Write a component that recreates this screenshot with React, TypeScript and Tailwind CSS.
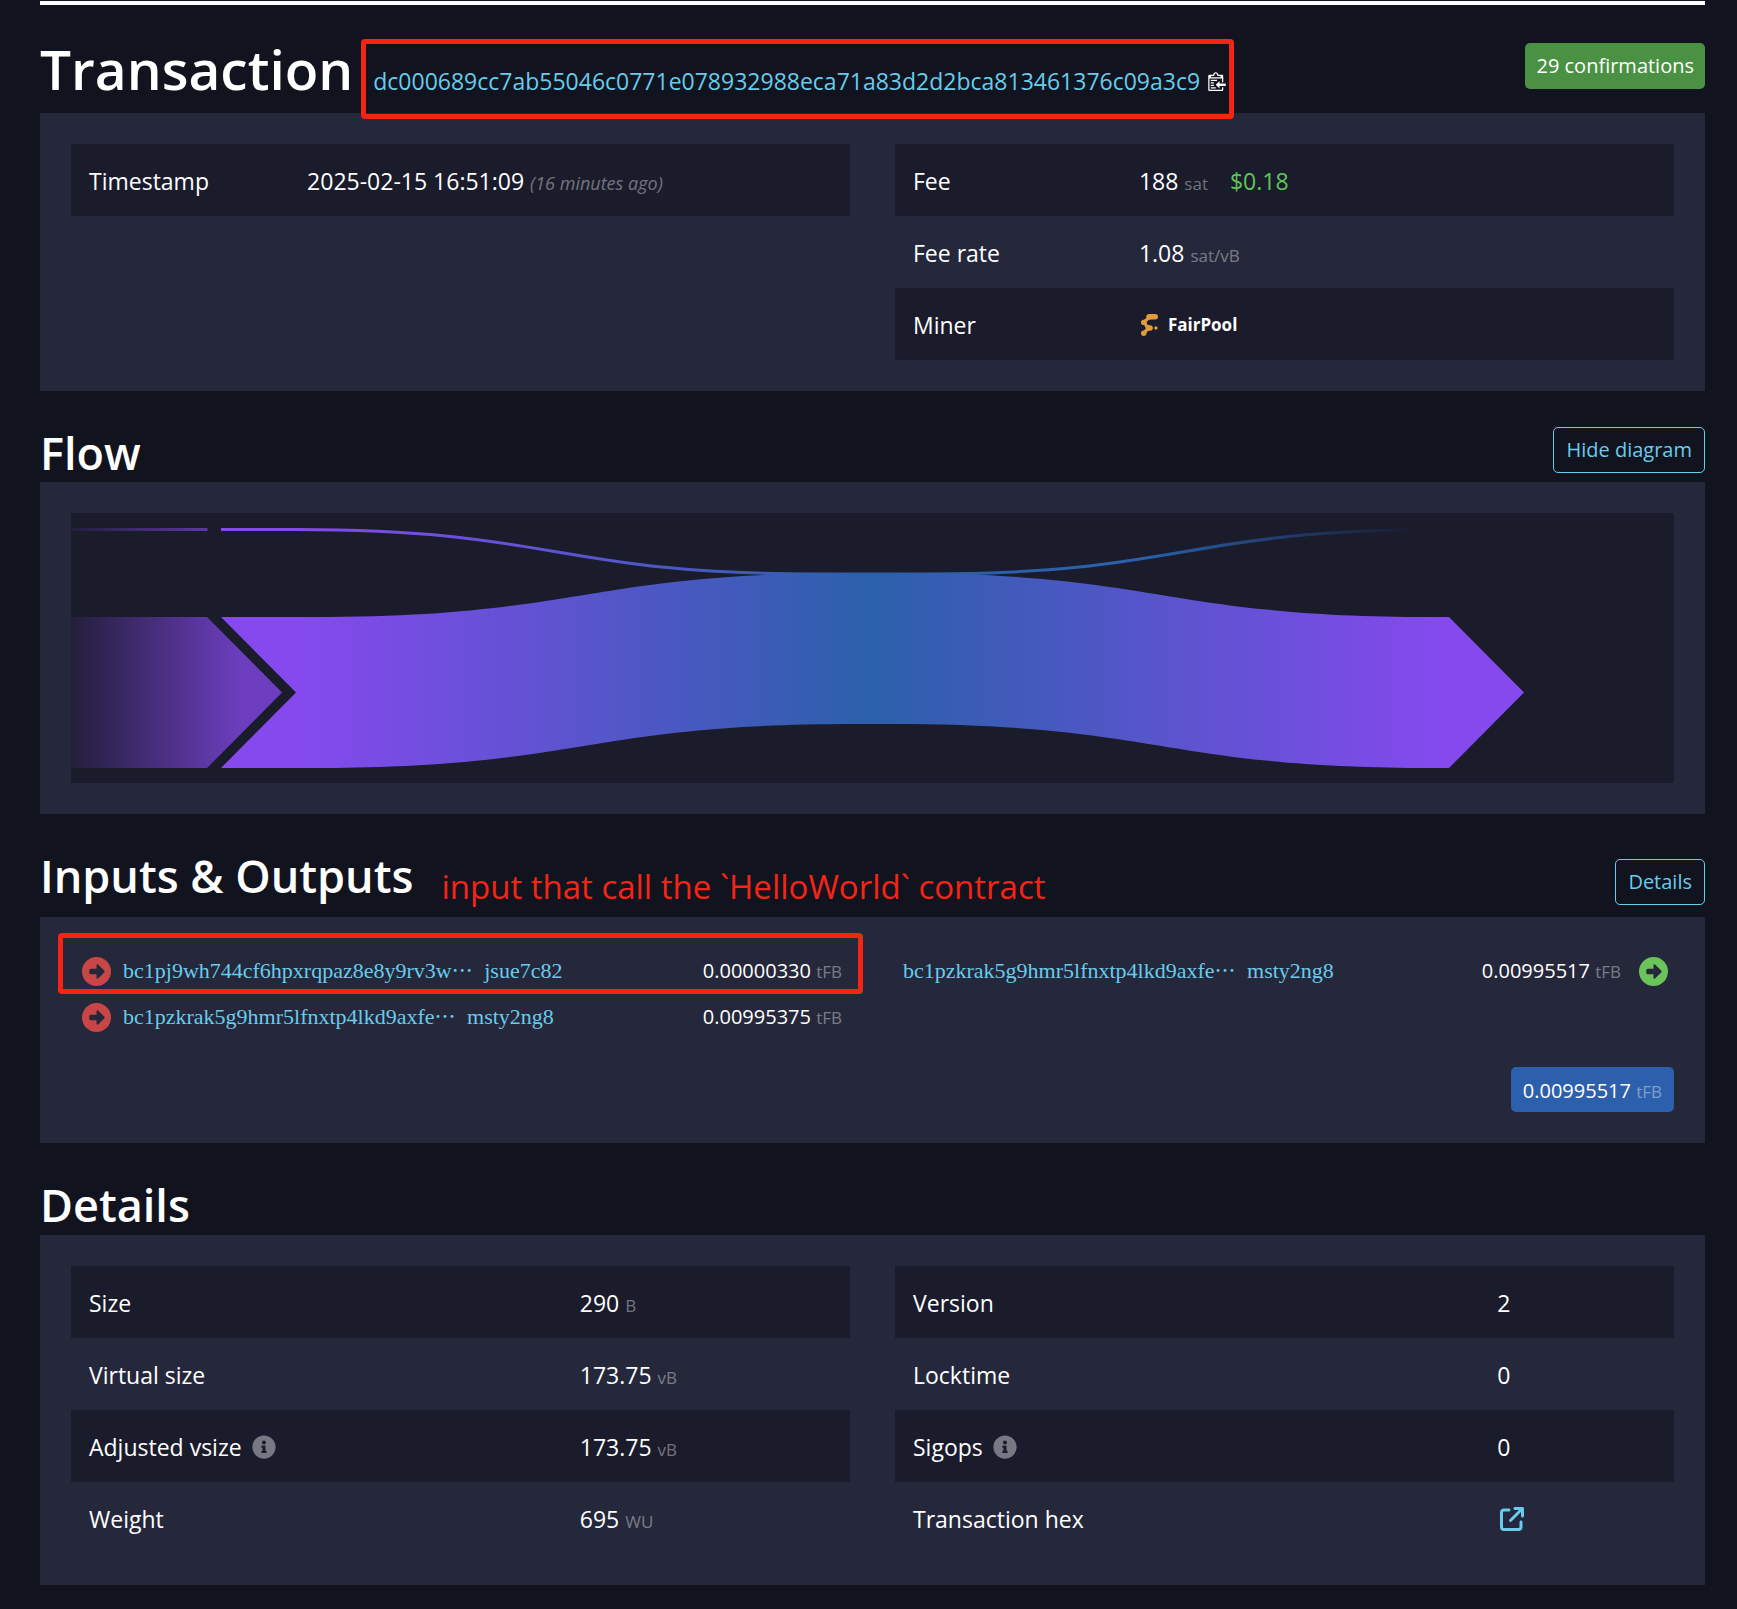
import type { ReactNode } from "react";
import { FaInfoCircle } from "react-icons/fa";
import { FaArrowUpRightFromSquare, FaCircleRight } from "react-icons/fa6";

const TX_ID = "dc000689cc7ab55046c0771e078932988eca71a83d2d2bca813461376c09a3c9";

type RowData = { label: string; info?: boolean; value: ReactNode };

function Unit({ children }: { children: ReactNode }) {
  return <span className="text-[17px] leading-none text-white/40">{children}</span>;
}

function Panel({ children }: { children: ReactNode }) {
  return <div className="bg-[#25273b] p-[31px]">{children}</div>;
}

function InfoTable({ rows, labelWidth }: { rows: RowData[]; labelWidth: string }) {
  return (
    <table className="w-full table-fixed self-start">
      <tbody>
        {rows.map((row) => (
          <tr key={row.label} className="h-[72px] odd:bg-[#1a1b2b]">
            <th scope="row" className={`${labelWidth} px-[18px] pt-0.5 text-left font-normal`}>
              <span className="flex items-center gap-[10px]">
                {row.label}
                {row.info && <FaInfoCircle className="size-6 text-[#787885]" aria-label="More information" />}
              </span>
            </th>
            <td className="px-[18px] pt-0.5">{row.value}</td>
          </tr>
        ))}
      </tbody>
    </table>
  );
}

function ClippyIcon() {
  return (
    <svg viewBox="0 0 14 16" className="h-5 w-[18px] fill-white" aria-hidden="true">
      <path d="M2 13h4v1H2v-1zm5-6H2v1h5V7zm2 3V8l-3 3 3 3v-2h5v-2H9zM4.5 9H2v1h2.5V9zM2 12h2.5v-1H2v1zm9 1h1v2c-.02.28-.11.52-.3.7-.19.18-.42.28-.7.3H1c-.55 0-1-.45-1-1V4c0-.55.45-1 1-1h3c0-1.11.89-2 2-2 1.11 0 2 .89 2 2h3c.55 0 1 .45 1 1v5h-1V6H1v9h10v-2zM2 5h8c0-.55-.45-1-1-1H8c-.55 0-1-.45-1-1s-.45-1-1-1-1 .45-1 1-.45 1-1 1H3c-.55 0-1 .45-1 1z" />
    </svg>
  );
}

function FairPoolLogo() {
  return (
    <svg viewBox="0 0 17 22" className="h-[22px] w-[17px] fill-[#e09c3a]" aria-hidden="true">
      <rect x="5.3" y="0" width="11.7" height="5.4" rx="2.7" />
      <path d="M6 3.5 L10 5.2 Q6.2 6 5.4 9 L2 6.5 Z" />
      <rect x="0" y="5.8" width="5.6" height="5.2" rx="2.6" />
      <path d="M3 10.8 L5.2 8.5 Q6 11 8.5 11.6 L8 16.5 L5 14.5 Z" />
      <rect x="5" y="11.3" width="6.8" height="5.4" rx="2.6" />
      <circle cx="14.9" cy="14" r="1.8" />
      <path d="M5.2 14 L8.4 16.6 Q5.8 17 5 20 L2 17.5 Z" />
      <rect x="0" y="16.6" width="5.4" height="5.4" rx="2.7" />
    </svg>
  );
}

function FlowDiagram() {
  return (
    <svg viewBox="0 0 1603 270" className="block h-auto w-full bg-[#1a1b2b]" role="img" aria-label="Transaction flow">
      <defs>
        <linearGradient id="connector" gradientUnits="userSpaceOnUse" x1="0" y1="0" x2="170" y2="0">
          <stop offset="0" stopColor="#8649ee" stopOpacity="0.08" />
          <stop offset="1" stopColor="#8649ee" stopOpacity="0.76" />
        </linearGradient>
        <linearGradient id="input" gradientUnits="userSpaceOnUse" x1="225" y1="0" x2="801" y2="0">
          <stop offset="0" stopColor="#8649ee" />
          <stop offset="1" stopColor="#2b60aa" />
        </linearGradient>
        <linearGradient id="output" gradientUnits="userSpaceOnUse" x1="801" y1="0" x2="1378" y2="0">
          <stop offset="0" stopColor="#2b60aa" />
          <stop offset="1" stopColor="#8649ee" />
        </linearGradient>
        <linearGradient id="fee" gradientUnits="userSpaceOnUse" x1="801" y1="0" x2="1345" y2="0">
          <stop offset="0" stopColor="#2b60aa" />
          <stop offset="0.5" stopColor="#2b60aa" />
          <stop offset="1" stopColor="#2b60aa" stopOpacity="0" />
        </linearGradient>
      </defs>
      <path d="M0 15H136L137 16.5L136 18H0Z" fill="url(#connector)" />
      <path d="M0 104H136L211 179.5L136 255H0Z" fill="url(#connector)" />
      <path d="M150 16.5H225C485 16.5 485 61 745 61H802" fill="none" stroke="url(#input)" strokeWidth="3" />
      <path d="M801 61H855C1113 61 1113 16.5 1371 16.5H1453" fill="none" stroke="url(#fee)" strokeWidth="3" />
      <path
        d="M150 104H241C512 104 512 60 783 60H802V211H783C512 211 512 255 241 255H150L225 179.5Z"
        fill="url(#input)"
      />
      <path
        d="M801 60H820C1091 60 1091 104 1362 104H1378L1453 179.5L1378 255H1362C1091 255 1091 211 820 211H801Z"
        fill="url(#output)"
      />
    </svg>
  );
}

function Address({ head, tail }: { head: string; tail: string }) {
  return (
    <a href="#address" className="flex-1 font-['Liberation_Serif','Noto_Sans_CJK_SC',serif] text-[22px] text-[#68ccec]">
      {head}
      <span className="mr-[6px] font-['Noto_Sans_CJK_SC',sans-serif] text-[21px] leading-none" lang="zh-CN">…</span>{" "}
      {tail}
    </a>
  );
}

function Amount({ value }: { value: string }) {
  return (
    <span className="text-[20px]">
      {value} <Unit>tFB</Unit>
    </span>
  );
}

function OutlineButton({ children }: { children: ReactNode }) {
  return (
    <button type="button" className="h-[46px] rounded-[5px] border border-[#68ccec] px-3 text-[20px] text-[#68ccec]">
      {children}
    </button>
  );
}

const summaryRows: RowData[] = [
  {
    label: "Fee",
    value: (
      <>
        188 <Unit>sat</Unit>
        <span className="ml-[22px] text-[#5fc659]">$0.18</span>
      </>
    ),
  },
  { label: "Fee rate", value: <>1.08 <Unit>sat/vB</Unit></> },
  {
    label: "Miner",
    value: (
      <span className="flex items-center gap-[10px] pl-0.5 text-[17px] font-bold">
        <FairPoolLogo />
        FairPool
      </span>
    ),
  },
];

const sizeRows: RowData[] = [
  { label: "Size", value: <>290 <Unit>B</Unit></> },
  { label: "Virtual size", value: <>173.75 <Unit>vB</Unit></> },
  { label: "Adjusted vsize", info: true, value: <>173.75 <Unit>vB</Unit></> },
  { label: "Weight", value: <>695 <Unit>WU</Unit></> },
];

const versionRows: RowData[] = [
  { label: "Version", value: "2" },
  { label: "Locktime", value: "0" },
  { label: "Sigops", info: true, value: "0" },
  {
    label: "Transaction hex",
    value: (
      <span className="flex pl-[3px]">
        <a href="#hex" aria-label="Transaction hex" className="text-[#68ccec]">
          <FaArrowUpRightFromSquare className="size-6" />
        </a>
      </span>
    ),
  },
];

export default function App() {
  return (
    <main className="min-h-screen bg-[#11131e] pt-px pr-8 pb-6 pl-10 font-['Open_Sans','Noto_Sans',sans-serif] text-[23px] leading-[36px] text-white">
      <div className="h-1 bg-white" />

      <section>
        <header className="flex items-start justify-between pt-[38px] pb-[14px]">
          <div className="flex items-baseline gap-5">
            <h1 className="text-[55px] leading-[52px] font-semibold">Transaction</h1>
            <div className="relative flex items-center gap-2">
              <a href="#tx" className="text-[#68ccec]">{TX_ID}</a>
              <button type="button" aria-label="Copy transaction id">
                <ClippyIcon />
              </button>
              <div className="pointer-events-none absolute -top-6 -right-2 -bottom-5 -left-3 rounded-[4px] border-[5px] border-[#f62317]" />
            </div>
          </div>
          <button type="button" className="h-[46px] rounded-[5px] bg-[#4a9143] px-[11px] text-[20px]">
            29 confirmations
          </button>
        </header>
        <Panel>
          <div className="grid grid-cols-2 gap-[45px]">
            <InfoTable
              labelWidth="w-[28%]"
              rows={[
                {
                  label: "Timestamp",
                  value: (
                    <>
                      2025-02-15 16:51:09{" "}
                      <i className="text-[18px] leading-none text-white/40">(16 minutes ago)</i>
                    </>
                  ),
                },
              ]}
            />
            <InfoTable labelWidth="w-[29%]" rows={summaryRows} />
          </div>
        </Panel>
      </section>

      <section>
        <header className="flex items-start justify-between pt-9 pb-[3px]">
          <h2 className="text-[45px] leading-[52px] font-semibold">Flow</h2>
          <OutlineButton>Hide diagram</OutlineButton>
        </header>
        <Panel>
          <FlowDiagram />
        </Panel>
      </section>

      <section>
        <header className="flex items-end justify-between pt-9 pb-3">
          <div className="flex items-end gap-7">
            <h2 className="pb-[3px] text-[45px] leading-[52px] font-semibold">Inputs &amp; Outputs</h2>
            <p className="text-[33px] leading-[36px] text-[#f62317]">input that call the `HelloWorld` contract</p>
          </div>
          <OutlineButton>Details</OutlineButton>
        </header>
        <Panel>
          <div className="grid grid-cols-2 gap-[45px]">
            <ul>
              <li className="relative flex h-[46px] items-center gap-3 pr-2 pl-[11px]">
                <FaCircleRight className="size-[29px] text-[#c84646]" />
                <Address head="bc1pj9wh744cf6hpxrqpaz8e8y9rv3w" tail="jsue7c82" />
                <Amount value="0.00000330" />
                <div className="pointer-events-none absolute -inset-x-[13px] -top-[15px] bottom-0 rounded-[4px] border-[5px] border-[#f62317]" />
              </li>
              <li className="flex h-[46px] items-center gap-3 pr-2 pl-[11px]">
                <FaCircleRight className="size-[29px] text-[#c84646]" />
                <Address head="bc1pzkrak5g9hmr5lfnxtp4lkd9axfe" tail="msty2ng8" />
                <Amount value="0.00995375" />
              </li>
            </ul>
            <ul>
              <li className="flex h-[46px] items-center pr-[6px] pl-2">
                <Address head="bc1pzkrak5g9hmr5lfnxtp4lkd9axfe" tail="msty2ng8" />
                <Amount value="0.00995517" />
                <FaCircleRight className="ml-[18px] size-[29px] text-[#6bc45a]" />
              </li>
            </ul>
          </div>
          <div className="mt-[27px] flex justify-end">
            <button type="button" className="h-[45px] rounded-[5px] bg-[#2d60ac] px-3">
              <Amount value="0.00995517" />
            </button>
          </div>
        </Panel>
      </section>

      <section>
        <header className="pt-9 pb-1">
          <h2 className="text-[45px] leading-[52px] font-semibold">Details</h2>
        </header>
        <Panel>
          <div className="grid grid-cols-2 gap-[45px]">
            <InfoTable labelWidth="w-[63%]" rows={sizeRows} />
            <InfoTable labelWidth="w-3/4" rows={versionRows} />
          </div>
        </Panel>
      </section>
    </main>
  );
}
